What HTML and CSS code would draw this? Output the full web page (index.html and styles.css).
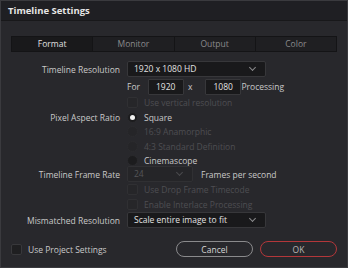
FILE: index.html
```html
<!DOCTYPE html>
<html lang="en">
<head>
  <title>Timeline Settings</title>
  <link rel="stylesheet" href="styles.css">
</head>
<body>
  <div class="window">
    <div class="titlebar">Timeline Settings</div>

    <div class="tabs">
      <div class="tab active">Format</div>
      <div class="tab">Monitor</div>
      <div class="tab">Output</div>
      <div class="tab">Color</div>
    </div>

    <div class="form">
      <div class="row r-res">
        <div class="label">Timeline Resolution</div>
        <div class="select wide">1920 x 1080 HD <span class="chev"></span></div>
      </div>
      <div class="row r-for">
        <div class="label"></div>
        <div class="inline">
          <span>For</span>
          <div class="field">1920</div>
          <span class="times">x</span>
          <div class="field">1080</div>
          <span>Processing</span>
        </div>
      </div>
      <div class="row r-cb">
        <div class="label"></div>
        <div class="check disabled"><span class="box"></span>Use vertical resolution</div>
      </div>
      <div class="row r-radio">
        <div class="label">Pixel Aspect Ratio</div>
        <div class="radio"><span class="dot on"></span>Square</div>
      </div>
      <div class="row r-radio">
        <div class="label"></div>
        <div class="radio disabled"><span class="dot"></span>16:9 Anamorphic</div>
      </div>
      <div class="row r-radio">
        <div class="label"></div>
        <div class="radio disabled"><span class="dot"></span>4:3 Standard Definition</div>
      </div>
      <div class="row r-radio">
        <div class="label"></div>
        <div class="radio"><span class="dot"></span>Cinemascope</div>
      </div>
      <div class="row r-rate">
        <div class="label">Timeline Frame Rate</div>
        <div class="inline">
          <div class="select narrow disabled">24 <span class="chev"></span></div>
          <span class="fps">Frames per second</span>
        </div>
      </div>
      <div class="row r-cb">
        <div class="label"></div>
        <div class="check disabled"><span class="box"></span>Use Drop Frame Timecode</div>
      </div>
      <div class="row r-cb">
        <div class="label"></div>
        <div class="check disabled"><span class="box"></span>Enable Interlace Processing</div>
      </div>
      <div class="row r-res">
        <div class="label">Mismatched Resolution</div>
        <div class="select wide">Scale entire image to fit <span class="chev"></span></div>
      </div>
    </div>

    <div class="footer">
      <div class="check"><span class="box"></span>Use Project Settings</div>
      <div class="buttons">
        <button class="btn">Cancel</button>
        <button class="btn ok">OK</button>
      </div>
    </div>
  </div>
</body>
</html>
```

FILE: styles.css
```css
html, body {
  margin: 0;
  padding: 0;
  background-color: #28282c;
}

body {
  font-family: "Open Sans", "Noto Sans", sans-serif;
  font-size: 8.5px;
  color: #c9c9c9;
}

.window {
  width: 346px;
  height: 266px;
  border: 1px solid #3a3a3e;
  background-color: #28282c;
}

.titlebar {
  height: 19px;
  line-height: 19px;
  padding-left: 7px;
  background-color: #1f1f23;
  border-bottom: 1px solid #18181a;
  color: #e6e6e6;
  font-weight: bold;
  font-size: 9.5px;
}

.tabs {
  display: flex;
  margin: 15px 10px 0 10px;
  border: 1px solid #141416;
  background-color: #1f1f22;
  height: 14px;
}

.tab {
  flex: 1;
  text-align: center;
  line-height: 14px;
  color: #8a8a8c;
  border-left: 1px solid #141416;
}

.tab:first-child {
  border-left: none;
}

.tab.active {
  background-color: #19191b;
  color: #e0e0e0;
}

.form {
  margin-top: 9px;
  padding-left: 7px;
}

.row {
  display: grid;
  grid-template-columns: 112px 1fr;
  column-gap: 7px;
  align-items: center;
}

.r-res { height: 16px; }
.r-for { height: 17px; margin-top: 1px; }
.r-cb { height: 15px; }
.r-radio { height: 14.5px; }
.r-rate { height: 16px; margin-top: -2px; }

.label {
  text-align: right;
  color: #c9c9c9;
}

.select {
  position: relative;
  box-sizing: border-box;
  height: 16px;
  line-height: 14px;
  padding-left: 6px;
  background-color: #19191b;
  border: 1px solid #37373a;
  border-radius: 2px;
  color: #e2e2e2;
}

.select.wide {
  width: 139px;
}

.select.narrow {
  width: 66px;
}

.select.disabled {
  background-color: #252528;
  border-color: #303033;
  color: #555558;
}

.chev {
  position: absolute;
  right: 10px;
  top: 3px;
  width: 4px;
  height: 4px;
  border-right: 1px solid #8a8a8c;
  border-bottom: 1px solid #8a8a8c;
  transform: rotate(45deg);
}

.select.disabled .chev {
  border-color: #4a4a4d;
}

.inline {
  display: flex;
  align-items: center;
}

.field {
  box-sizing: border-box;
  width: 36px;
  height: 16px;
  line-height: 14px;
  margin-left: 8px;
  padding-left: 7px;
  background-color: #19191b;
  border: 1px solid #37373a;
  border-radius: 1px;
  color: #e2e2e2;
}

.times {
  margin: 0 5px 0 4px;
}

.fps {
  margin-left: 8px;
}

.check, .radio {
  display: flex;
  align-items: center;
  color: #c9c9c9;
}

.check.disabled, .radio.disabled {
  color: #4e4e52;
}

.box {
  box-sizing: border-box;
  width: 11px;
  height: 11px;
  margin-right: 6px;
  background-color: #1f1f21;
  border: 1px solid #38383b;
  border-radius: 2px;
}

.check.disabled .box {
  background-color: #262629;
  border-color: #303033;
}

.dot {
  position: relative;
  box-sizing: border-box;
  width: 11px;
  height: 11px;
  margin-right: 6px;
  border-radius: 50%;
  background-color: #1c1c1e;
  border: 1px solid #2a2a2d;
}

.radio.disabled .dot {
  background-color: #252528;
  border-color: #2b2b2e;
}

.dot.on::after {
  content: "";
  position: absolute;
  left: 2px;
  top: 2px;
  width: 5px;
  height: 5px;
  border-radius: 50%;
  background-color: #f2f2f2;
}

.footer {
  display: flex;
  justify-content: space-between;
  align-items: center;
  margin-top: 13px;
  padding: 0 10px;
}

.buttons {
  display: flex;
  gap: 7px;
}

.btn {
  box-sizing: border-box;
  width: 77px;
  height: 16px;
  padding: 0;
  border-radius: 8px;
  border: 1px solid #8a8a8c;
  background-color: #28282c;
  color: #d6d6d6;
  font-family: "Open Sans", "Noto Sans", sans-serif;
  font-size: 8.5px;
}

.btn.ok {
  border-color: #b3373a;
  color: #b8b8b8;
}
```
